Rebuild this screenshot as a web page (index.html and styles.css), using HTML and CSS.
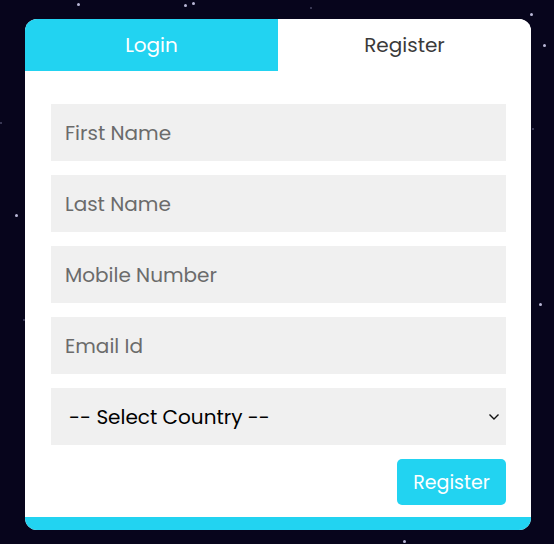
FILE: index.html
```html
<!DOCTYPE html>
<html lang="en">
<head>
<meta charset="utf-8">
<title>Register</title>
<link rel="stylesheet" href="styles.css">
</head>
<body>
<div class="sky">
  <span class="star" style="left:77px;top:3px"></span>
  <span class="star" style="left:184px;top:4px"></span>
  <span class="star" style="left:192px;top:2px"></span>
  <span class="star" style="left:530px;top:13px"></span>
  <span class="star" style="left:543px;top:44px"></span>
  <span class="star dim" style="left:310px;top:7px"></span>
  <span class="star" style="left:15px;top:214px"></span>
  <span class="star dim" style="left:23px;top:319px"></span>
  <span class="star dim" style="left:0px;top:122px"></span>
  <span class="star dim" style="left:532px;top:128px"></span>
  <span class="star" style="left:539px;top:303px"></span>
  <span class="star" style="left:403px;top:540px"></span>
</div>
<main class="page">
  <section class="card">
    <nav class="tabs">
      <button class="tab tab-active" type="button">Login</button>
      <button class="tab" type="button">Register</button>
    </nav>
    <form class="form">
      <input class="field" type="text" placeholder="First Name">
      <input class="field" type="text" placeholder="Last Name">
      <input class="field" type="text" placeholder="Mobile Number">
      <input class="field" type="email" placeholder="Email Id">
      <div class="select-wrap">
        <select class="field select">
          <option>-- Select Country --</option>
        </select>
        <svg class="chevron" width="12" height="8" viewBox="0 0 12 8" aria-hidden="true"><path d="M1.5 1.5 L6 6 L10.5 1.5" fill="none" stroke="#111" stroke-width="1.4"/></svg>
      </div>
      <div class="actions">
        <button class="submit" type="button">Register</button>
      </div>
    </form>
    <div class="bottom-bar"></div>
  </section>
</main>
</body>
</html>
```
FILE: styles.css
```css
* { box-sizing: border-box; }
html, body { margin: 0; height: 100%; }
body {
  background: #07051c;
  font-family: "Poppins", "DejaVu Sans", "Noto Sans", sans-serif;
  position: relative;
  overflow: hidden;
}
.sky { position: absolute; inset: 0; }
.star {
  position: absolute;
  width: 3px; height: 3px;
  border-radius: 50%;
  background: #b9b7d6;
}
.star.dim { background: #4a4866; width: 2px; height: 2px; }
.page {
  position: relative;
  padding: 19px 0 0 25px;
}
.card {
  width: 506px;
  height: 511px;
  background: #fff;
  border-radius: 12px;
  overflow: hidden;
  display: flex;
  flex-direction: column;
}
.tabs {
  display: grid;
  grid-template-columns: 253px 253px;
  height: 52px;
}
.tab {
  border: 0;
  margin: 0;
  background: #fff;
  font-family: inherit;
  font-size: 20px;
  color: #3a3a3a;
  padding: 0;
  line-height: 52px;
}
.tab-active { background: #22d3f1; color: #fff; }
.form {
  flex: 1;
  padding: 33px 25px 0 26px;
  display: flex;
  flex-direction: column;
  gap: 14px;
}
.field {
  display: block;
  width: 100%;
  height: 57px;
  border: 0;
  background: #f0f0f0;
  padding: 0 14px;
  font-family: inherit;
  font-size: 20px;
  color: #111;
  outline: none;
}
.field::placeholder { color: #6b6b6b; }
.select-wrap {
  display: grid;
  align-items: center;
}
.select-wrap > * { grid-area: 1 / 1; }
.select {
  appearance: none;
  -webkit-appearance: none;
  padding-left: 18px;
  font-size: 20px;
  color: #000;
}
.chevron { justify-self: end; margin-right: 6px; }
.actions {
  display: flex;
  justify-content: flex-end;
}
.submit {
  width: 109px;
  height: 46px;
  border: 0;
  border-radius: 5px;
  background: #22d3f1;
  color: #fff;
  font-family: inherit;
  font-size: 19px;
  padding: 0;
}
.bottom-bar {
  height: 13px;
  background: #22d3f1;
}
```
